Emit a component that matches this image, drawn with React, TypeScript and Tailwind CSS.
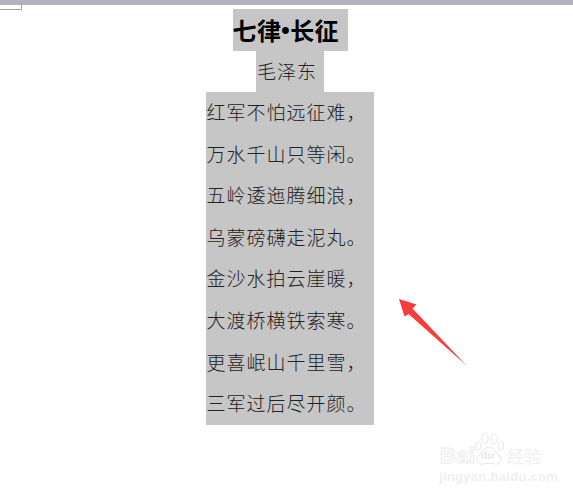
const lines = ["红军不怕远征难，","万水千山只等闲。","五岭逶迤腾细浪，","乌蒙磅礴走泥丸。","金沙水拍云崖暖，","大渡桥横铁索寒。","更喜岷山千里雪，","三军过后尽开颜。"];
const cjk = "font-['SimSun','Noto_Sans_CJK_SC',sans-serif]";

export default function App() {
  return (
    <div className={`relative w-[573px] h-[494px] bg-white overflow-hidden ${cjk}`}>
      <div className="h-[5px] bg-[#b1b4c0]" />
      <div className="absolute left-0 top-[5px] w-[22px] h-[5px] border-r border-b border-[#a0a0a0]" />
      <div className="flex flex-col items-center pt-[4px] pl-[7px] text-[#222]">
        <div className="bg-[#c6c6c6] w-[115px] h-[42px] flex items-center text-[24px] font-bold tracking-[0.4px] text-black whitespace-nowrap">
          七律<span className="font-['Liberation_Sans',sans-serif]">•</span>长征
        </div>
        <div className="bg-[#c6c6c6] w-[68px] h-[41px] flex items-center pl-[1px] text-[19px] tracking-[1px] font-light whitespace-nowrap">毛泽东</div>
        <div className="bg-[#c6c6c6] w-[168px] h-[333px] mr-[1px] flex flex-col">
          {lines.map((l) => (
            <div key={l} className="h-[41.6px] flex items-center pl-[1px] pb-[1px] text-[19px] tracking-[1px] font-light whitespace-nowrap">{l}</div>
          ))}
        </div>
      </div>
      <svg className="absolute left-[395px] top-[292px]" width="75" height="75" viewBox="0 0 75 75">
        <path d="M4 7 L21.5 12.5 L17.5 16.5 L71.5 73.5 L13.5 22 L9.5 24.5 Z" fill="#fb3c3c" />
      </svg>
      <div className="absolute left-[439px] top-[432px] w-[104px] flex flex-col text-[#efefef] font-['Liberation_Sans',sans-serif]">
        <div className="flex items-end h-[34px]">
          <span className="ml-[1px] w-[33px] text-[22px] font-bold leading-[20px] text-transparent [-webkit-text-stroke:1px_#ececec] tracking-[0.5px]">Bai</span>
          <div className="relative w-[32px] h-[34px]">
            <svg className="block" width="32" height="34" viewBox="0 0 32 34" fill="none" stroke="#e9e9e9" strokeWidth="1.1">
              <ellipse cx="5" cy="14" rx="2.7" ry="4.2" />
              <ellipse cx="12" cy="6.5" rx="3.2" ry="5" />
              <ellipse cx="21" cy="7" rx="3.2" ry="5" />
              <ellipse cx="28" cy="14" rx="2.7" ry="4.2" />
              <path d="M16 15 C11 15 10 20 6 23 C2 27 5 33 10 32 C14 31 18 31 22 32 C27 33 30 27 26 23 C22 20 21 15 16 15 Z" />
            </svg>
            <span className="absolute left-[8px] top-[18px] text-[11px] font-bold leading-none text-[#e9e9e9]">du</span>
          </div>
          <span className="ml-[2px] text-[17px] leading-[20px] whitespace-nowrap font-['Noto_Sans_CJK_SC',sans-serif]">经验</span>
        </div>
        <div className="mt-[4px] text-[13px] font-bold leading-[13px] whitespace-nowrap tracking-[0.3px]">jingyan.baidu.com</div>
      </div>
    </div>
  );
}
